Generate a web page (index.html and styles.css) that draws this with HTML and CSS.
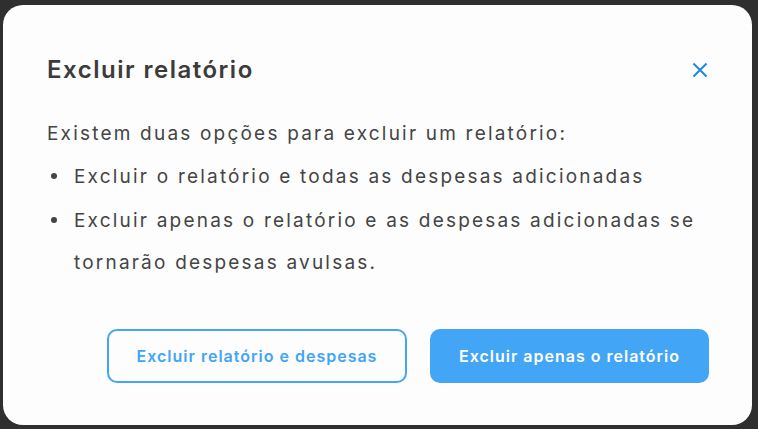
FILE: index.html
```html
<!DOCTYPE html>
<html lang="pt-BR">
<head>
    <meta charset="UTF-8">
    <meta name="viewport" content="width=device-width, initial-scale=1.0">
    <title>Excluir relatório</title>
    <link rel="stylesheet" href="styles.css">
</head>
<body>

<div class="modal">
    <div class="modal-header">
        <h2>Excluir relatório</h2>
        <button class="close-btn" aria-label="Fechar">
            <svg width="16" height="16" viewBox="0 0 16 16">
                <path d="M1.5 1.5 L14.5 14.5 M14.5 1.5 L1.5 14.5" stroke="#1e88e5" stroke-width="2" fill="none"/>
            </svg>
        </button>
    </div>

    <div class="modal-body">
        <p>Existem duas opções para excluir um relatório:</p>
        <ul>
            <li><span>Excluir o relatório e todas as despesas adicionadas</span></li>
            <li><span>Excluir apenas o relatório e as despesas adicionadas se tornarão despesas avulsas.</span></li>
        </ul>
    </div>

    <div class="modal-footer">
        <button class="btn btn-outline">Excluir relatório e despesas</button>
        <button class="btn btn-primary">Excluir apenas o relatório</button>
    </div>
</div>

</body>
</html>
```

FILE: styles.css
```css
html, body {
    height: 100%;
}
body {
    margin: 0;
    padding: 5px 6px 4px 3px;
    box-sizing: border-box;
    background-color: #2f2f2f;
    font-family: Inter, "Open Sans", sans-serif;
    color: #444;
    display: flex;
}
.modal {
    flex: 1;
    display: flex;
    flex-direction: column;
    background-color: #fdfdfd;
    border-radius: 20px;
    padding: 50px 43px 42px 44px;
}
.modal-header {
    display: flex;
    justify-content: space-between;
    align-items: center;
}
.modal-header h2 {
    margin: 0;
    font-size: 24px;
    line-height: 30px;
    font-weight: 600;
    color: #3b3b3b;
    letter-spacing: 1.5px;
}
.close-btn {
    background: none;
    border: none;
    padding: 0;
    margin-right: 1px;
    width: 16px;
    height: 16px;
    cursor: pointer;
}
.close-btn svg {
    display: block;
}
.modal-body {
    margin-top: 28px;
    font-size: 19px;
    line-height: 42px;
    letter-spacing: 2.2px;
}
.modal-body p {
    margin: 0;
}
.modal-body ul {
    list-style: none;
    margin: 1px 0 0;
    padding: 0;
}
.modal-body li {
    display: grid;
    grid-template-columns: 27px 1fr;
    margin-bottom: 2px;
}
.modal-body li::before {
    content: "";
    width: 6px;
    height: 6px;
    border-radius: 50%;
    background-color: #444;
    margin: 17px 0 0 4px;
}
.modal-footer {
    margin-top: auto;
    display: flex;
    justify-content: flex-end;
    gap: 23px;
}
.btn {
    height: 54px;
    border-radius: 10px;
    font-family: inherit;
    font-size: 16px;
    font-weight: 600;
    letter-spacing: 1px;
    cursor: pointer;
}
.btn-outline {
    width: 300px;
    background-color: transparent;
    border: 2px solid #42a5f5;
    color: #42a5f5;
}
.btn-primary {
    width: 279px;
    background-color: #42a5f5;
    border: none;
    color: white;
}
```
